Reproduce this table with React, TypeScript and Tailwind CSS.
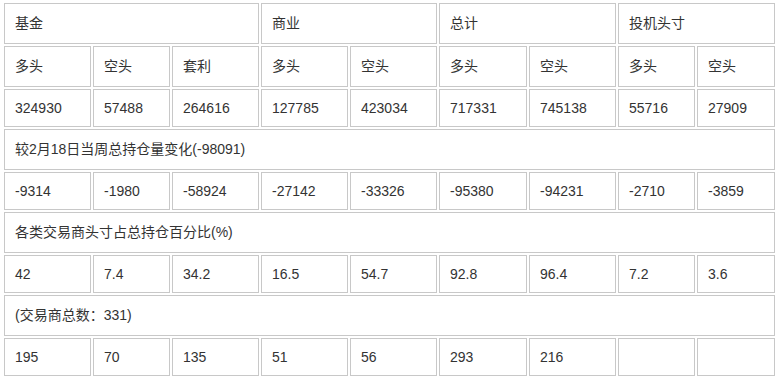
const header = [
  { label: "基金", span: "col-span-3" },
  { label: "商业", span: "col-span-2" },
  { label: "总计", span: "col-span-2" },
  { label: "投机头寸", span: "col-span-2" },
];

const sides = ["多头", "空头", "套利", "多头", "空头", "多头", "空头", "多头", "空头"];

const rows: { kind: "cells" | "note"; values?: string[]; text?: string; tall?: boolean }[] = [
  { kind: "cells", values: ["324930", "57488", "264616", "127785", "423034", "717331", "745138", "55716", "27909"] },
  { kind: "note", text: "较2月18日当周总持仓量变化(-98091)" },
  { kind: "cells", values: ["-9314", "-1980", "-58924", "-27142", "-33326", "-95380", "-94231", "-2710", "-3859"] },
  { kind: "note", text: "各类交易商头寸占总持仓百分比(%)" },
  { kind: "cells", values: ["42", "7.4", "34.2", "16.5", "54.7", "92.8", "96.4", "7.2", "3.6"] },
  { kind: "note", text: "(交易商总数：331)" },
  { kind: "cells", values: ["195", "70", "135", "51", "56", "293", "216", "", ""] },
];

const cell = "flex items-center border border-[#c8c8c8] pl-[10px] text-[14px] text-[#333] whitespace-nowrap";

const App = () => {
  return (
    <div className="min-h-[381px] bg-white pl-[4px] pt-[3px]" style={{ fontFamily: '"Liberation Sans", Arial, "Noto Sans CJK SC", sans-serif' }}>
      <div className="grid grid-cols-[87px_77px_87px_87px_87px_88px_87px_77px_78px] gap-[2px]">
        {/* group header */}
        {header.map((h) => (
          <div key={h.label} className={`${cell} ${h.span} h-[41px]`}>{h.label}</div>
        ))}

        {/* long / short labels */}
        {sides.map((s, i) => (
          <div key={"s" + i} className={`${cell} h-[41px]`}>{s}</div>
        ))}

        {rows.map((r, ri) =>
          r.kind === "note" ? (
            <div key={"n" + ri} className={`${cell} col-span-9 h-[41px]`}>{r.text}</div>
          ) : (
            r.values!.map((v, i) => (
              <div key={ri + "-" + i} className={`${cell} h-[38px]`}>{v}</div>
            ))
          )
        )}
      </div>
    </div>
  );
};

export default App;
